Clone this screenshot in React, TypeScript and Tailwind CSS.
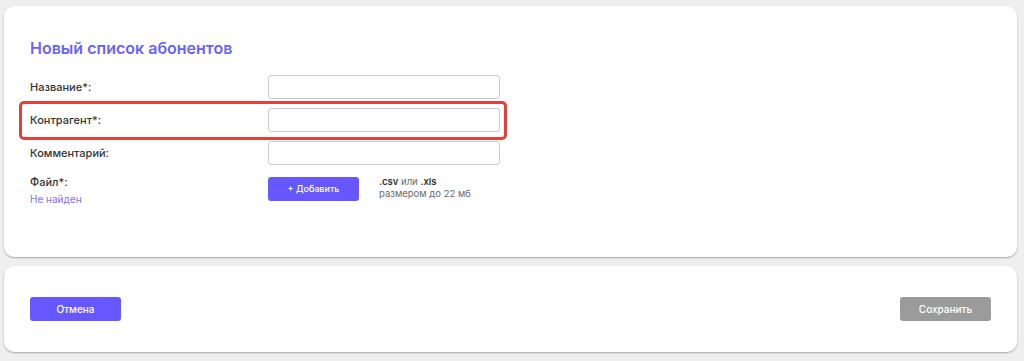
import React from 'react';

const font = { fontFamily: 'Inter, "Noto Sans", sans-serif' };

function Field({ label, highlight }: { label: string; highlight?: boolean }) {
  return (
    <div className="relative flex items-center h-[24px]">
      <span className="w-[238px] text-[11px] font-medium text-[#333]">{label}</span>
      <input className="w-[232px] h-[24px] rounded-[3px] border border-[#c9c9d1] bg-white outline-none" />
      {highlight && (
        <div className="absolute left-[-11px] top-[-7px] w-[488px] h-[39px] rounded-[5px] border-[3px] border-[#e2403a] pointer-events-none" />
      )}
    </div>
  );
}

export default function App() {
  return (
    <div style={font} className="w-[1024px] h-[361px] bg-[#efefef] pt-[6px] pl-[4px]">
      <div className="w-[1013px] h-[251px] rounded-[10px] bg-white shadow-[0_1px_2px_rgba(0,0,0,0.3)] pl-[26px] pt-[32px]">
        <h1 className="text-[16px] leading-[20px] font-semibold text-[#6b62f6]">Новый список абонентов</h1>
        <div className="mt-[17px] flex flex-col gap-[9px]">
          <Field label="Название*:" />
          <Field label="Контрагент*:" highlight />
          <Field label="Комментарий:" />
        </div>
        <div className="mt-[10px] flex">
          <div className="w-[238px]">
            <div className="text-[11px] leading-[14px] font-medium text-[#333]">Файл*:</div>
            <div className="mt-[3px] text-[10px] leading-[14px] text-[#7d74f5]">Не найден</div>
          </div>
          <button className="mt-[2px] w-[91px] h-[24px] rounded-[3px] bg-[#6657ff] text-white text-[9px] font-medium">
            + Добавить
          </button>
          <div className="ml-[20px] mt-[1px] text-[9.5px] leading-[12px] text-[#6a6a6a]">
            <div>
              <span className="font-semibold text-[#333]">.csv</span> или{' '}
              <span className="font-semibold text-[#333]">.xls</span>
            </div>
            <div>размером до 22 мб</div>
          </div>
        </div>
      </div>
      <div className="mt-[9px] w-[1013px] h-[86px] rounded-[10px] bg-white shadow-[0_1px_2px_rgba(0,0,0,0.3)] px-[26px] flex items-center justify-between">
        <button className="w-[91px] h-[24px] rounded-[3px] bg-[#6657ff] text-white text-[10px] font-medium">Отмена</button>
        <button className="w-[91px] h-[24px] rounded-[3px] bg-[#9b9b9b] text-white text-[10px] font-medium">Сохранить</button>
      </div>
    </div>
  );
}
